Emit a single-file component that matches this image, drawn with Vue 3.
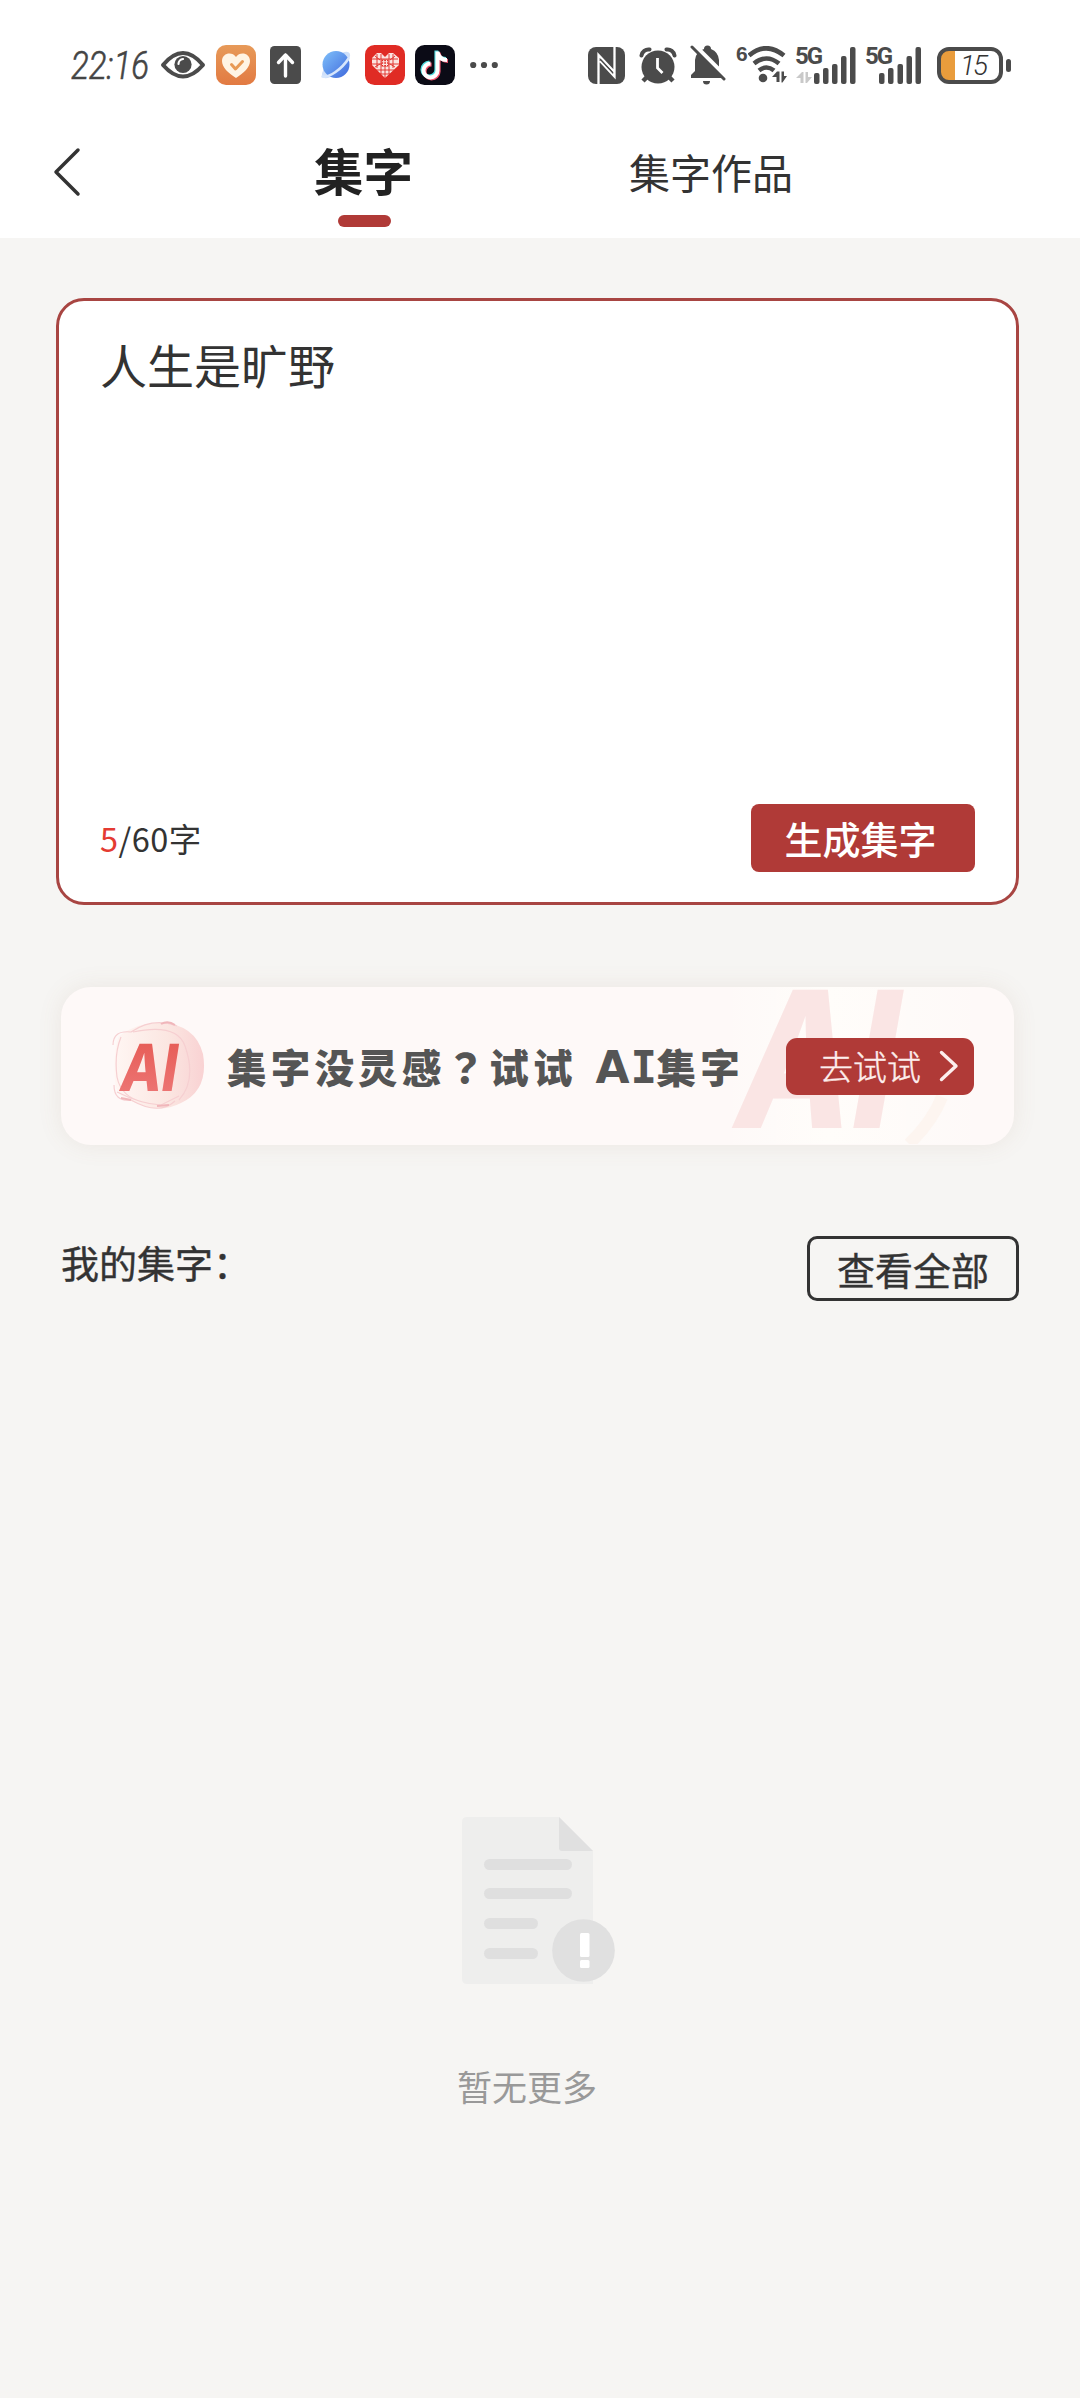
<script setup>
import { ref, computed } from 'vue'

const content = ref('人生是旷野')
const maxLength = 60
const count = computed(() => content.value.length)
</script>

<template>
  <div class="screen">
    <header class="top">
      <div class="status">
        <div class="status-left">
          <svg class="time" width="89" height="40" viewBox="0 0 89 40">
            <text x="0" y="34" textLength="78" lengthAdjust="spacingAndGlyphs">22:16</text>
          </svg>
          <svg class="eye" width="46" height="32" viewBox="0 0 46 32">
            <path d="M3 16Q23-8 43 16Q23 39 3 16Z" fill="#fff" stroke="#4b4b4b" stroke-width="4" stroke-linejoin="round" />
            <circle cx="23" cy="15.500" r="8.600" fill="#4b4b4b" />
            <path d="M18.500 15a5 5 0 0 1 4.500-5" fill="none" stroke="#fff" stroke-width="2.200" stroke-linecap="round" />
          </svg>
          <svg class="app-care" width="40" height="40" viewBox="0 0 40 40">
            <defs>
              <linearGradient id="care" x1="0" y1="0" x2="0" y2="1">
                <stop offset="0" stop-color="#e79a59" />
                <stop offset="1" stop-color="#e27a42" />
              </linearGradient>
            </defs>
            <rect width="40" height="40" rx="10" fill="url(#care)" />
            <path d="M20 33C12 28 6 22 6 16C6 8 16 6 20 12C24 6 34 8 34 16C34 22 28 28 20 33Z" fill="#fff4e4" />
            <path d="M15.500 19.500l4 4.500l7-7.500" fill="none" stroke="#e89a55" stroke-width="3" stroke-linecap="round" stroke-linejoin="round" />
          </svg>
          <svg class="app-up" width="31" height="38" viewBox="0 0 31 38">
            <rect width="31" height="38" rx="4.500" fill="#4b4b4b" />
            <path d="M15.500 30V9M8.500 16.500l7-7.500l7 7.500" fill="none" stroke="#fff" stroke-width="3.400" stroke-linecap="round" stroke-linejoin="round" />
          </svg>
          <svg class="app-planet" width="32" height="32" viewBox="0 0 32 32">
            <defs>
              <linearGradient id="planet" x1="0" y1="0" x2="1" y2="1">
                <stop offset="0" stop-color="#7fc0fa" />
                <stop offset="1" stop-color="#3f68dc" />
              </linearGradient>
            </defs>
            <ellipse cx="16" cy="16" rx="18" ry="7" transform="rotate(-43 16 16)" fill="#cfe0fa" />
            <circle cx="16" cy="15.500" r="13.500" fill="url(#planet)" />
            <path d="M2.500 27.500C9 29 22 20 28.500 9.500" fill="none" stroke="#d7e6fc" stroke-width="2.600" stroke-linecap="round" />
          </svg>
          <svg class="app-heart" width="40" height="40" viewBox="0 0 40 40">
            <rect width="40" height="40" rx="9.500" fill="#e02b24" />
            <path d="M20 33L7 20V13L12 8H16L20 12L24 8H28L34 13V20Z" fill="#fbe4e0" />
            <path d="M7 14h26M6 19h28M11 25h18M15 29h10M12 9v14M16 9v20M24 9v20M28 9v14M20 21v12M10 11l5 4M30 11l-5 4M10 22l5-3M30 22l-5-3" fill="none" stroke="#e02b24" stroke-width="0.900" />
            <rect x="16.500" y="14.500" width="7" height="7" fill="#e02b24" />
            <path d="M18.700 15v6M21.500 15v6M17 16.700h6M17 19.400h6" stroke="#fbe4e0" stroke-width="1.100" />
          </svg>
          <svg class="app-note" width="40" height="40" viewBox="0 0 40 40">
            <rect width="40" height="40" rx="9.500" fill="#0b0b16" />
            <g fill="none" stroke-width="4">
              <path d="M21.400 5.500V24.500a7 7 0 1 1-7-7M21.400 6C22 11 26 14 31 14" stroke="#52dce0" />
              <path d="M23.600 7.500V26.500a7 7 0 1 1-7-7M23.600 8C24.500 13 28 16 33 16" stroke="#ee5570" />
              <path d="M22.500 6.500V25.500a7 7 0 1 1-7-7M22.500 7C23.500 12 27 15 32 15" stroke="#fff" />
            </g>
          </svg>
          <svg class="more" width="28" height="8" viewBox="0 0 28 8">
            <circle cx="3.200" cy="4" r="3.100" fill="#4b4b4b" />
            <circle cx="14" cy="4" r="3.100" fill="#4b4b4b" />
            <circle cx="24.800" cy="4" r="3.100" fill="#4b4b4b" />
          </svg>
        </div>
        <div class="status-right">
          <svg class="nfc" width="37" height="37" viewBox="0 0 37 37">
            <rect width="37" height="37" rx="8" fill="#4b4b4b" />
            <path d="M10.500 37V8L26 24.500M26.500 0V29.500L12 14" fill="none" stroke="#fff" stroke-width="2.300" />
            <path d="M12.500 11.500L25 25V27L12.500 13.500Z" fill="#4b4b4b" />
          </svg>
          <svg class="alarm" width="38" height="37" viewBox="0 0 38 37">
            <path d="M2.500 8.500a7 7 0 0 1 8-6M35.500 8.500a7 7 0 0 0-8-6" fill="none" stroke="#4b4b4b" stroke-width="4" stroke-linecap="round" />
            <path d="M8 30l-4 4M30 30l4 4" stroke="#4b4b4b" stroke-width="4.500" />
            <circle cx="19" cy="20" r="16.500" fill="#4b4b4b" />
            <path d="M18.500 11v10l5 5" fill="none" stroke="#fff" stroke-width="2.800" />
          </svg>
          <svg class="bell" width="36" height="40" viewBox="0 0 36 40">
            <path d="M1 33V30L5 26V15A12 12 0 0 1 14 4a3.500 3.500 0 0 1 7 0A13 13 0 0 1 29 15V26L32 33Z" fill="#4b4b4b" />
            <path d="M13 36h7a3.500 3.500 0 0 1-7 0Z" fill="#4b4b4b" />
            <path d="M4 0L37 33" stroke="#fff" stroke-width="5" />
            <path d="M2 2L34 34" stroke="#4b4b4b" stroke-width="3" stroke-linecap="round" />
          </svg>
          <div class="wifi">
            <span>6</span>
            <svg width="42" height="38" viewBox="0 0 42 38">
              <g fill="none" stroke="#4b4b4b" stroke-width="4.600">
                <path d="M1 9.500Q18-5 36 9.500" />
                <path d="M6 17.500Q18.500 7.500 31 17.500" />
                <path d="M11 24.500Q18.500 18.500 26 24.500" />
              </g>
              <circle cx="15" cy="32" r="4.300" fill="#4b4b4b" />
              <path d="M24 31l5-5.500h2.500V36h-3V31ZM33.500 25.500H36V30H39l-4.500 6.500h-1Z" fill="#4b4b4b" />
            </svg>
          </div>
          <div class="signal">
            <span>5G</span>
            <svg width="60" height="37" viewBox="0 0 60 37">
              <path d="M0 31l6-6h1.500V36h-3V31ZM9.500 25H12V30h4l-5 6H9.500Z" fill="#c9c9c9" />
              <g fill="#4b4b4b">
                <rect x="18" y="26" width="5.500" height="11" rx="2" />
                <rect x="27" y="21" width="5.500" height="16" rx="2" />
                <rect x="36" y="17" width="5.500" height="20" rx="2" />
                <rect x="45" y="9" width="5.500" height="28" rx="2" />
                <rect x="54" y="0" width="5.500" height="37" rx="2" />
              </g>
            </svg>
          </div>
          <div class="signal second">
            <span>5G</span>
            <svg width="56" height="37" viewBox="0 0 56 37">
              <g fill="#4b4b4b">
                <rect x="13" y="26" width="5.500" height="11" rx="2" />
                <rect x="22" y="21" width="5.500" height="16" rx="2" />
                <rect x="31.500" y="17" width="5.500" height="20" rx="2" />
                <rect x="40.500" y="9" width="5.500" height="28" rx="2" />
                <rect x="49.500" y="0" width="5.500" height="37" rx="2" />
              </g>
            </svg>
          </div>
          <div class="battery"><span>15</span></div>
          <i class="battery-tip"></i>
        </div>
      </div>

      <nav class="nav">
        <svg class="back" width="28" height="50" viewBox="0 0 28 50">
          <path d="M25 3L3 25L25 47" fill="none" stroke="#333" stroke-width="3.500" stroke-linecap="round" stroke-linejoin="round" />
        </svg>
        <div class="tab active">集字</div>
        <div class="tab">集字作品</div>
      </nav>
    </header>

    <main>
      <section class="editor">
        <div class="content">{{ content }}</div>
        <div class="editor-foot">
          <div class="counter"><b>{{ count }}</b>/{{ maxLength }}字</div>
          <button class="generate">生成集字</button>
        </div>
      </section>

      <section class="banner">
        <svg class="watermark" width="260" height="157" viewBox="0 0 260 157">
          <defs>
            <linearGradient id="glow" x1="0" y1="0" x2="1" y2="0">
              <stop offset="0" stop-color="#fffdfa" stop-opacity="0" />
              <stop offset=".4" stop-color="#fffdfa" />
              <stop offset="1" stop-color="#fffdfa" stop-opacity="0" />
            </linearGradient>
          </defs>
          <rect width="260" height="157" fill="url(#glow)" />
          <path d="M185 157Q208 135 218 110" fill="none" stroke="#fdf5f0" stroke-width="12" />
          <text x="4" y="141" textLength="160" lengthAdjust="spacingAndGlyphs" transform="translate(25 0) skewX(-10)">AI</text>
        </svg>
        <svg class="logo" width="96" height="92" viewBox="0 0 96 92">
          <defs>
            <linearGradient id="blob" x1="0" y1="0" x2="1" y2="0">
              <stop offset="0" stop-color="#fff6f3" />
              <stop offset=".6" stop-color="#fbe6e1" />
              <stop offset="1" stop-color="#f9d2d3" />
            </linearGradient>
            <linearGradient id="ink" x1="0" y1="0" x2="0" y2="1">
              <stop offset="0" stop-color="#e55750" />
              <stop offset="1" stop-color="#ee7b7b" />
            </linearGradient>
          </defs>
          <path d="M8 16Q26 2 50 3Q84 4 92 34Q98 70 70 83Q48 94 26 83Q4 78 4 60Q2 30 8 16Z" fill="url(#blob)" />
          <path d="M2 25Q2 10 20 12Q42-3 66 6M3 65Q3 82 20 80Q48 96 64 81M10 17Q3 34 6 57Q10 77 32 82M22 12Q66 3 74 26Q86 60 68 80M6 72Q30 84 50 85L68 76" fill="none" stroke="#f6cfd1" stroke-width="1.200" />
          <path d="M50 4q7-4 14 1M10 78l10 2M46 86l12-1" fill="none" stroke="#f0b6ba" stroke-width="2" />
          <text x="6" y="71" textLength="57" lengthAdjust="spacingAndGlyphs" fill="url(#ink)" transform="translate(12 0) skewX(-9)">AI</text>
        </svg>
        <div class="slogan">集字没灵感<span class="mark">？</span>试试<span class="latin a">A</span><span class="latin i">I</span>集字</div>
        <button class="try">
          <span>去试试</span>
          <svg width="20" height="32" viewBox="0 0 20 32">
            <path d="M2.500 2.500L17 16L2.500 29.500" fill="none" stroke="#fdeeed" stroke-width="3.400" stroke-linecap="round" stroke-linejoin="round" />
          </svg>
        </button>
      </section>

      <section class="mine">
        <h2>我的集字：</h2>
        <button class="all">查看全部</button>
      </section>

      <section class="empty">
        <svg width="154" height="168" viewBox="0 0 154 168">
          <path d="M5 0H97L131 34V167H5Q0 167 0 162V5Q0 0 5 0Z" fill="#eeeeed" />
          <path d="M97 0L131 34H100Q97 34 97 31Z" fill="#e0e0e0" />
          <g fill="#dfdfdf">
            <rect x="22" y="42" width="88" height="11" rx="5.500" />
            <rect x="22" y="71" width="88" height="11" rx="5.500" />
            <rect x="22" y="101" width="54" height="11" rx="5.500" />
            <rect x="22" y="131" width="54" height="11" rx="5.500" />
          </g>
          <circle cx="121.500" cy="133.500" r="31.300" fill="#e0e0e0" />
          <rect x="118" y="116" width="9.500" height="24" rx="1.500" fill="#fff" />
          <rect x="118" y="143" width="9.500" height="8" rx="1.500" fill="#fff" />
        </svg>
        <p>暂无更多</p>
      </section>
    </main>
  </div>
</template>

<style>
body {
  background: #f6f5f3;
}
</style>

<style scoped>
.screen {
  width: 1080px;
  height: 2398px;
  overflow: hidden;
  background: #f6f5f3;
  color: #333;
  font-family: "Noto Sans CJK SC", sans-serif;
}
.screen * {
  box-sizing: border-box;
}
svg {
  display: block;
  flex: none;
}
button {
  padding: 0;
  border: 0;
  font-family: inherit;
}
.top {
  height: 238px;
  background: #fff;
}
.status {
  display: flex;
  justify-content: space-between;
  height: 130px;
  padding: 0 69px 0 71px;
}
.status-left,
.status-right {
  display: flex;
  align-items: center;
  height: 130px;
}
.time text {
  font: italic 300 38px Roboto, sans-serif;
  fill: #444;
  stroke: #444;
  stroke-width: 0.6px;
}
.app-care { margin-left: 10px; }
.app-up { margin-left: 14px; }
.app-planet { margin-left: 19px; }
.app-heart { margin-left: 13px; }
.app-note { margin-left: 10px; }
.more { margin-left: 15px; }
.alarm { margin-left: 14px; }
.bell { margin-left: 13px; }
.wifi {
  display: flex;
  width: 50px;
  height: 38px;
  margin-left: 10px;
}
.wifi span {
  width: 12px;
  flex: none;
  font: 700 21px/16px "Liberation Sans", sans-serif;
  color: #4b4b4b;
}
.signal {
  position: relative;
  width: 60px;
  height: 37px;
  margin-left: 10px;
}
.signal.second {
  width: 56px;
}
.signal span {
  position: absolute;
  left: -1px;
  top: 0;
  font: 700 24px/19px Roboto, sans-serif;
  letter-spacing: -2px;
  color: #4b4b4b;
}
.battery {
  width: 66px;
  height: 37px;
  margin-left: 15px;
  padding-left: 19px;
  border: 4px solid #4b4b4b;
  border-radius: 12px;
  background: linear-gradient(90deg, #e99c3c 14px, #fff 14px);
}
.battery span {
  display: block;
  font: italic 300 28px/30px Roboto, sans-serif;
  letter-spacing: -2px;
  color: #333;
}
.battery-tip {
  width: 5px;
  height: 13px;
  margin-left: 3px;
  border-radius: 3px;
  background: #4b4b4b;
}
.nav {
  display: flex;
  height: 108px;
}
.back {
  margin: 17px 0 0 53px;
}
.tab {
  width: 170px;
  margin: 11px 0 0 215px;
  font-size: 41px;
  line-height: 60px;
  white-space: nowrap;
}
.tab.active {
  width: 100px;
  margin: 10px 0 0 233px;
  font-size: 49.500px;
  font-weight: 700;
  color: #222;
}
.tab.active::after {
  content: "";
  display: block;
  width: 53px;
  height: 12px;
  margin: 15px 0 0 24px;
  border-radius: 6px;
  background: #b03a37;
}
.editor {
  display: flex;
  flex-direction: column;
  justify-content: space-between;
  width: 963px;
  height: 607px;
  margin: 60px 0 0 56px;
  padding: 31px 41px 30px 41px;
  border: 3px solid #a84542;
  border-radius: 28px;
  background: #fff;
}
.content {
  font-size: 47px;
  line-height: 64px;
}
.editor-foot {
  display: flex;
  align-items: center;
  justify-content: space-between;
}
.counter {
  font-size: 32.500px;
  line-height: 40px;
  letter-spacing: 0.500px;
  padding-bottom: 1px;
}
.counter b {
  font-weight: 400;
  color: #e43b32;
}
.generate {
  width: 224px;
  height: 68px;
  padding-right: 5px;
  border-radius: 8px;
  background: #b03a37;
  color: #fff;
  font-size: 38px;
  font-weight: 500;
  line-height: 64px;
}
.banner {
  position: relative;
  display: flex;
  align-items: center;
  width: 953px;
  height: 158px;
  margin: 82px 0 0 61px;
  padding-left: 50px;
  border-radius: 30px;
  background: #fef9f8;
  box-shadow: 0 0 24px rgba(150, 110, 80, 0.1);
}
.watermark {
  position: absolute;
  right: 30px;
  top: 0;
}
.watermark text {
  font: 800 190px Inter, sans-serif;
  fill: #fae5e4;
}
.logo text {
  font: 800 65px Inter, sans-serif;
}
.slogan {
  position: relative;
  width: 558px;
  margin-left: 20px;
  font-size: 39.500px;
  font-weight: 900;
  line-height: 60px;
  letter-spacing: 4.200px;
  white-space: nowrap;
  color: #555;
}
.mark {
  font-family: "Noto Sans CJK TC", sans-serif;
}
.latin {
  display: inline-block;
  font-family: "DejaVu Sans", sans-serif;
  font-size: 44px;
  font-weight: 700;
  line-height: 40px;
  letter-spacing: 0;
}
.latin.a {
  width: 35px;
  margin-left: 19px;
}
.latin.i {
  width: 26px;
  font-family: "DejaVu Sans Mono", monospace;
}
.try {
  position: relative;
  display: flex;
  align-items: center;
  width: 188px;
  height: 57px;
  margin-left: 1px;
  padding-left: 33px;
  border-radius: 11px;
  background: #b03a37;
  color: #fdeeed;
  font-size: 34px;
  font-weight: 300;
  line-height: 54px;
  -webkit-text-stroke: 0.4px #fdeeed;
}
.try svg {
  margin-left: 18px;
}
.mine {
  display: flex;
  justify-content: space-between;
  height: 65px;
  margin: 91px 61px 0 61px;
}
h2 {
  margin: 0;
  font-size: 38px;
  font-weight: 400;
  line-height: 52px;
  -webkit-text-stroke: 0.4px #333;
}
.all {
  width: 212px;
  height: 65px;
  border: 3px solid #333;
  border-radius: 10px;
  background: none;
  color: #333;
  font-size: 38px;
  line-height: 59px;
  -webkit-text-stroke: 0.4px #333;
}
.empty {
  display: flex;
  flex-direction: column;
  width: 154px;
  margin: 516px 0 0 462px;
}
.empty p {
  margin: 76px 0 0 -5px;
  font-size: 35px;
  line-height: 50px;
  color: #999;
  white-space: nowrap;
}
</style>
